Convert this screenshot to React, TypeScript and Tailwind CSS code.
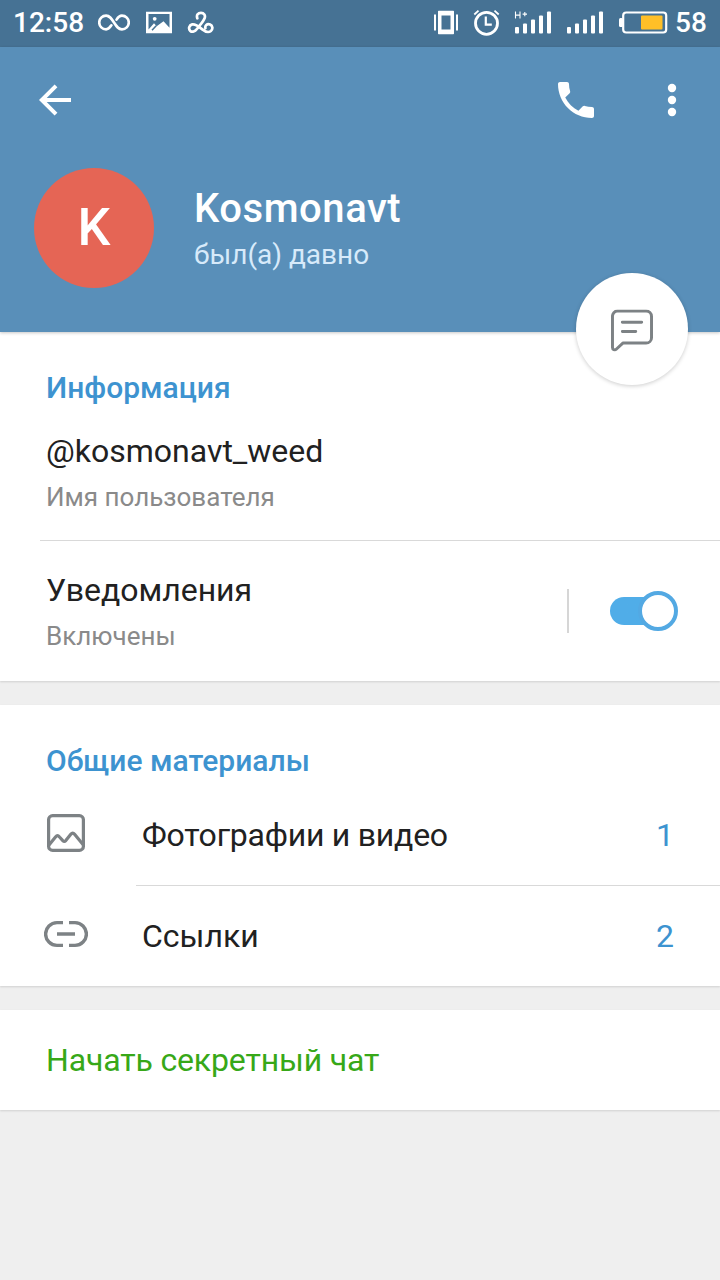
import type { ReactNode } from "react";

function SignalBars({ label }: { label?: boolean }) {
  return (
    <svg width="38" height="26" viewBox="0 0 38 26" className="shrink-0" fill="#fff">
      <rect x="1" y="17.5" width="4" height="6.5" rx="1" />
      <rect x="9" y="14" width="4" height="10" rx="1" />
      <rect x="17" y="10" width="4" height="14" rx="1" />
      <rect x="25" y="6" width="4" height="18" rx="1" />
      <rect x="33" y="2" width="4" height="22" rx="1" />
      {label && (
        <path d="M1.5 2v7M6 2v7M1.5 5.6H6M10.8 2.4v4.4M8.6 4.6H13" fill="none" stroke="#fff" strokeWidth="1.1" />
      )}
    </svg>
  );
}

function StatusBar() {
  return (
    <div className="flex h-[47px] items-center bg-[#467294] pl-[13px] pr-[14px] text-white">
      <span className="w-[71px] -translate-y-px text-[28px] font-medium leading-[28px]">12:58</span>
      <svg width="32" height="18" viewBox="0.8 0.8 32.4 18.4" className="ml-[14px] mr-px shrink-0 -translate-y-[1.5px]" fill="none" stroke="#fff" strokeWidth="2.7" strokeLinecap="round">
        <path d="M14.3 12.9C12.6 15.5 11 17 8.900 17a7 7 0 1 1 0-14c3.600 0 5.300 2.600 8.100 7s4.500 7 8.100 7a7 7 0 1 0 0-14c-2.400 0-3.900 1.500-5.500 4.100" />
      </svg>
      <svg width="26" height="22" viewBox="0 0 26 22" className="ml-[15px] shrink-0 -translate-y-[1.5px]">
        <path fill="#fff" fillRule="evenodd" d="M0 0h26v22H0zM2.500 2.500v15.500l5.500-6.300 2.700 3 6.800-5 6 6.500V2.500z" />
        <path d="M6 18.800l4.200-4.500" stroke="#467294" strokeWidth="1.500" />
        <circle cx="8.700" cy="7.300" r="1.900" fill="#fff" />
      </svg>
      <svg width="28" height="24" viewBox="0 0 28 24" className="ml-[15px] shrink-0 -translate-y-[1.5px]" fill="none" stroke="#fff" strokeWidth="2.7" strokeLinecap="round">
        <path d="M10.300 7.800C9.200 4.500 11 2.300 14 2.300s4.700 2.600 3.600 5.400C16.300 11 13 14.500 9.900 18.500c-1.900 2.500-4.700 3.600-6.600 1.900-2.200-2-1.200-5.800 1.900-6.500 3.300-.7 6.800 2.300 10.100 5 3 2.400 6.300 3.400 8.600 1.600 2.300-1.900 1.800-5.300-.8-6.400-3.200-1.300-5.300 1.200-4.700 3.600" />
      </svg>

      <div className="ml-auto flex items-center">
        <svg width="24" height="24" viewBox="0 0 24 24" className="shrink-0 -translate-y-[1.5px]" fill="#fff">
          <path fillRule="evenodd" d="M5 0h14a1 1 0 0 1 1 1v22a1 1 0 0 1-1 1H5a1 1 0 0 1-1-1V1a1 1 0 0 1 1-1zM7.500 5v14h9V5z" />
          <path d="M0 4h2v16H0zM22 4h2v16h-2z" />
        </svg>
        <svg width="28" height="28" viewBox="0 0 28 28" className="ml-[14px] shrink-0 -translate-y-[1.5px]" fill="none" stroke="#fff">
          <circle cx="14.500" cy="14.800" r="11" strokeWidth="2.800" />
          <path d="M13.800 8v8.200h6" strokeWidth="2.200" />
          <path d="M2.300 6l4.200-3.900M26.700 6l-4.200-3.900" strokeWidth="1.800" />
        </svg>
        <div className="ml-[14px] -translate-y-[1.5px]">
          <SignalBars label />
        </div>
        <div className="ml-[14px] -translate-y-[1.5px]">
          <SignalBars />
        </div>
        <svg width="49" height="24" viewBox="0 0 49 24" className="ml-[15px] shrink-0 -translate-y-[1.5px]">
          <rect x="4.200" y="2" width="43" height="20" rx="3" fill="none" stroke="#fff" strokeWidth="2.200" />
          <rect x="0" y="7.500" width="4" height="9" rx="1.500" fill="#fff" />
          <rect x="22" y="5" width="21.500" height="14" rx="1" fill="#ffbf27" />
        </svg>
        <span className="ml-[7px] w-[31px] -translate-y-px text-[28px] font-medium leading-[28px]">58</span>
      </div>
    </div>
  );
}

function Header() {
  return (
    <header className="relative z-10 flex h-[285px] flex-col bg-[#598fb9] shadow-[0_1px_3px_rgba(0,0,0,0.22)]">
      <div className="flex h-[106px] items-center pl-[39px] pr-[42px]">
        <svg width="34" height="32" viewBox="0 0 34 32" fill="none" stroke="#fff" strokeWidth="4">
          <path d="M32 16H4M17 1.800L2.800 16 17 30.200" />
        </svg>
        <svg width="36" height="36" viewBox="3 3 18 18" className="ml-auto" fill="#fff">
          <path d="M6.620 10.790c1.440 2.830 3.760 5.140 6.590 6.590l2.200-2.200c.27-.27.670-.36 1.020-.24 1.120.37 2.330.57 3.570.57.550 0 1 .45 1 1V20c0 .55-.45 1-1 1-9.390 0-17-7.610-17-17 0-.55.450-1 1-1h3.500c.55 0 1 .45 1 1 0 1.250.200 2.450.570 3.570.110.350.030.740-.25 1.020l-2.200 2.200z" />
        </svg>
        <svg width="12" height="34" viewBox="0 0 12 34" className="ml-[72px]" fill="#fff">
          <circle cx="6" cy="5" r="4.200" />
          <circle cx="6" cy="17" r="4.200" />
          <circle cx="6" cy="29" r="4.200" />
        </svg>
      </div>
      <div className="flex pl-[34px] pt-[15px]">
        <div className="flex h-[120px] w-[120px] items-center justify-center rounded-full bg-[#e56555] text-[52px] font-medium leading-[60px] text-white">
          K
        </div>
        <div className="ml-[40px] pt-[17px]">
          <h1 className="text-[40px] font-medium leading-[48px] tracking-[0.55px] text-white">Kosmonavt</h1>
          <p className="mt-[6px] text-[28px] leading-[32px] text-[#d7eafa]">был(а) давно</p>
        </div>
      </div>
      <button className="absolute right-[32px] top-[226px] flex h-[112px] w-[112px] items-center justify-center rounded-full bg-white shadow-[0_1px_4px_rgba(0,0,0,0.2)]">
        <svg width="42" height="42" viewBox="1 1 42.500 42.500" className="translate-y-[1.5px]" fill="none" stroke="#7d8285" strokeWidth="3" strokeLinecap="round" strokeLinejoin="round">
          <path d="M7.500 2.500h29a5.500 5.500 0 0 1 5.500 5.500v21.500a5.500 5.500 0 0 1-5.500 5.500H13l-6.700 6.200C4.800 42.700 2.500 41.500 2.500 39.500V8a5.200 5.200 0 0 1 5-5.500z" />
          <path d="M12.500 14h19.500M12.500 23.300h13.500" />
        </svg>
      </button>
    </header>
  );
}

function SectionTitle({ children }: { children: ReactNode }) {
  return <h2 className="text-[30px] font-medium leading-[40px] text-[#3d93d0]">{children}</h2>;
}

function MediaRow({ icon, label, count }: { icon: ReactNode; label: ReactNode; count: number }) {
  return (
    <div className="flex h-[100px] items-center pl-[42px] pr-[46px]">
      <div className="flex w-[48px] justify-center">{icon}</div>
      <span className="ml-[52px] text-[32px] leading-[40px] text-[#212121]">{label}</span>
      <span className="ml-auto text-[32px] leading-[40px] text-[#3d93d0]">{count}</span>
    </div>
  );
}

export default function App() {
  return (
    <main className="flex h-[1280px] w-[720px] flex-col overflow-hidden bg-[#efefef] font-['Roboto',sans-serif]">
      <StatusBar />
      <Header />

      <section className="h-[349px] shrink-0 bg-white pt-[36px] shadow-[0_1px_2px_rgba(0,0,0,0.13)]">
        <div className="pl-[46px]">
          <SectionTitle>Информация</SectionTitle>
          <p className="mt-[23px] text-[32px] leading-[40px] text-[#212121]">@kosmonavt_weed</p>
          <p className="mt-[10px] text-[26px] leading-[32px] text-[#8a8a8a]">Имя пользователя</p>
        </div>
        <div className="ml-[40px] mt-[27px] h-px bg-[#d9d9d9]" />
        <div className="flex h-[140px] items-center pl-[46px] pr-[42px]">
          <div>
            <p className="text-[32px] leading-[40px] text-[#212121]">Уведомления</p>
            <p className="mt-[10px] text-[26px] leading-[32px] text-[#8a8a8a]">Включены</p>
          </div>
          <div className="ml-auto h-[44px] w-[2px] bg-[#d6d6d6]" />
          <div className="ml-[41px] flex h-[28px] w-[68px] items-center justify-end rounded-full bg-gradient-to-r from-[#50ade8] from-70% to-transparent to-70%">
            <div className="h-[40px] w-[40px] shrink-0 rounded-full border-4 border-[#53a9e3] bg-white" />
          </div>
        </div>
      </section>

      <section className="mt-[24px] h-[281px] shrink-0 bg-white pt-[36px] shadow-[0_1px_2px_rgba(0,0,0,0.13)]">
        <div className="mb-[4px] pl-[46px]">
          <SectionTitle>Общие материалы</SectionTitle>
        </div>
        <MediaRow
          label={<span className="tracking-[-0.24px]">Фотографии и видео</span>}
          count={1}
          icon={
            <svg width="38" height="38" viewBox="0 0 38 38" className="-translate-y-[2px]" fill="none" stroke="#7d8285" strokeWidth="3.2" strokeLinejoin="round">
              <rect x="1.600" y="1.600" width="34.800" height="34.800" rx="4" />
              <path d="M2 31l6.500-8c1.500-1.800 2.500-1.800 4 0l3.300 3.600c1 1 2 1 3 0l5-6.300c1.300-1.600 2.500-1.600 3.800 0L36 30.500" />
            </svg>
          }
        />
        <div className="ml-[136px] h-px bg-[#d9d9d9]" />
        <MediaRow
          label="Ссылки"
          count={2}
          icon={
            <svg width="44" height="28" viewBox="0 0 44 28" className="-translate-y-[2px]" fill="none" stroke="#7d8285" strokeWidth="3.4">
              <path d="M19 2.600h-6a11.400 11.400 0 0 0 0 22.800h6M25 2.600h6a11.400 11.400 0 0 1 0 22.800h-6M13 14h18" />
            </svg>
          }
        />
      </section>

      <section className="mt-[24px] flex h-[100px] shrink-0 items-center bg-white pl-[46px] shadow-[0_1px_2px_rgba(0,0,0,0.13)]">
        <span className="text-[32px] leading-[40px] tracking-[-0.15px] text-[#37a818]">Начать секретный чат</span>
      </section>
    </main>
  );
}
